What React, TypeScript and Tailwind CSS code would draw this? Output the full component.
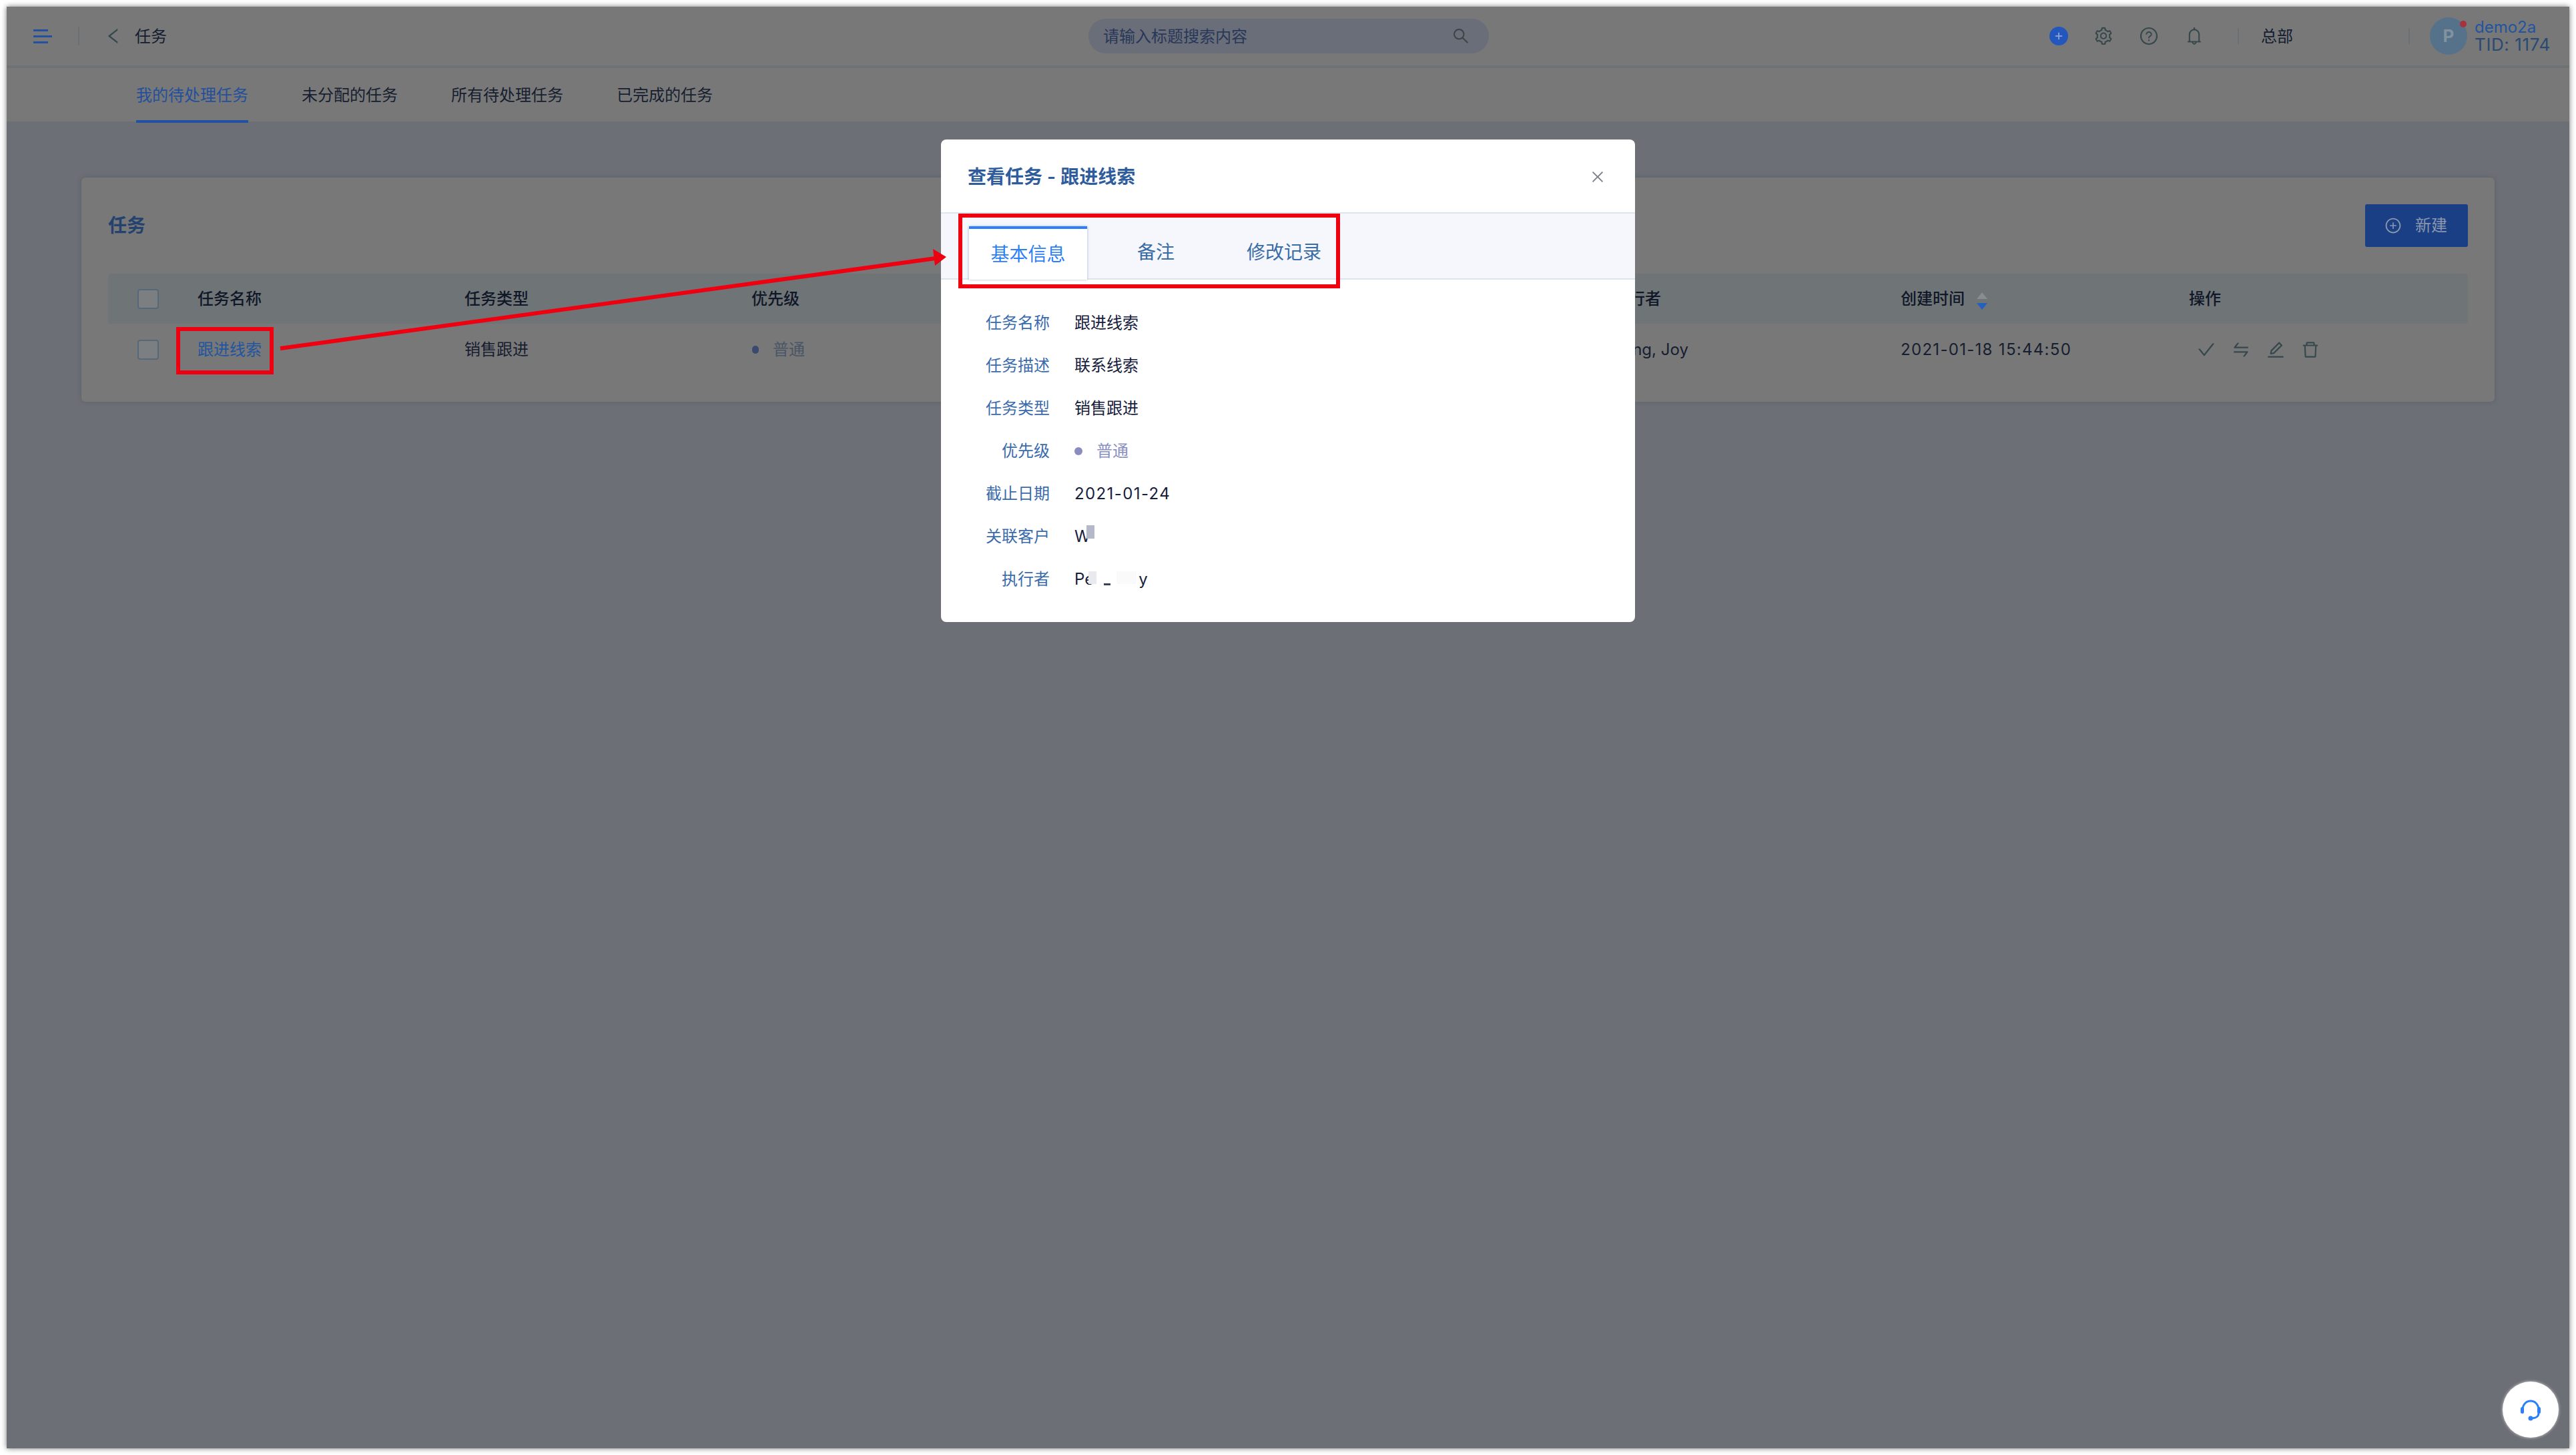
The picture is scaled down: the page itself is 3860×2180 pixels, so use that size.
import React from "react";
import {
  AiOutlineSetting,
  AiOutlineQuestionCircle,
  AiOutlineBell,
  AiOutlineSearch,
  AiOutlineCheck,
  AiOutlineSwap,
  AiOutlineEdit,
  AiOutlineDelete,
  AiOutlinePlusCircle,
  AiOutlineClose,
  AiOutlineLeft,
  AiOutlinePlus,
} from "react-icons/ai";

function Checkbox() {
  return <span className="block w-[32px] h-[30px] rounded-[4px] border-2 border-[#56687a] bg-[#7c7f81]" />;
}

function HeaderBar() {
  return (
    <header className="h-[92px] shrink-0 border-b-4 border-[#6d7274] bg-[#787878] flex items-center">
      <div className="ml-[40px] w-[28px] flex flex-col gap-[6px]">
        <span className="block h-[3px] w-[22px] bg-[#2450a0]" />
        <span className="block h-[3px] w-[28px] bg-[#2450a0]" />
        <span className="block h-[3px] w-[22px] bg-[#2450a0]" />
      </div>
      <span className="ml-[39px] w-[2px] h-[28px] bg-[#6a7074]" />
      <AiOutlineLeft className="ml-[36px] text-[#36484c]" size={30} />
      <span className="ml-[17px] mt-[1px] text-[24px] leading-none text-[#141c30]">任务</span>
      <div className="ml-[1381px] w-[600px] h-[52px] rounded-full bg-[#6a6e78] flex items-center justify-between pl-[22px] pr-[28px]">
        <span className="mt-[1px] text-[24px] leading-none text-[#28375a]">请输入标题搜索内容</span>
        <AiOutlineSearch className="text-[#3e4448]" size={28} />
      </div>
      <div className="ml-[840px] w-[28px] h-[28px] rounded-full bg-[#2357bd] flex items-center justify-center">
        <AiOutlinePlus className="text-[#8ba6d8]" size={14} strokeWidth={60} />
      </div>
      <AiOutlineSetting className="ml-[38px] text-[#36484c]" size={30} />
      <AiOutlineQuestionCircle className="ml-[38px] text-[#36484c]" size={30} />
      <AiOutlineBell className="ml-[38px] text-[#36484c]" size={30} />
      <span className="ml-[50px] w-[2px] h-[24px] bg-[#6a7074]" />
      <span className="ml-[33px] mt-[1px] text-[24px] leading-none text-[#141c30]">总部</span>
      <span className="ml-[173px] w-[2px] h-[24px] bg-[#6a7074]" />
      <div className="ml-[30px] relative w-[56px] h-[56px] rounded-full bg-[#56718a] flex items-center justify-center">
        <span className="text-[26px] font-bold text-[#82929f] leading-none">P</span>
        <span className="absolute right-[1px] top-[5px] w-[10px] h-[10px] rounded-full bg-[#a5323c]" />
      </div>
      <div className="ml-[11px] flex flex-col leading-[26px] whitespace-nowrap">
        <span className="text-[24px] text-[#2254a0]">demo2a</span>
        <span className="text-[26px] tracking-[0.6px] text-[#2a4a72]">TID: 1174</span>
      </div>
    </header>
  );
}

function TabsBar() {
  const tabs = ["我的待处理任务", "未分配的任务", "所有待处理任务", "已完成的任务"];
  return (
    <nav className="h-[80px] shrink-0 bg-[#787878] pl-[194px] flex gap-[80px]">
      {tabs.map((t, i) => (
        <div
          key={t}
          className={
            i === 0
              ? "h-[82px] pt-[3px] border-b-4 border-[#2250a3] flex items-center text-[24px] text-[#234f9c]"
              : "h-[82px] pt-[3px] border-b-4 border-transparent flex items-center text-[24px] text-[#161e30]"
          }
        >
          {t}
        </div>
      ))}
    </nav>
  );
}

const GRID = "grid grid-cols-[134px_400px_430px_1291px_431px_432px_1fr] items-center";

function TaskCard() {
  return (
    <section className="mx-[112px] mt-[84px] h-[336px] rounded-[6px] bg-[#787878] px-[40px] pt-[40px] shadow-[0_0_6px_rgba(60,70,80,0.35)]">
      <div className="h-[64px] flex items-center justify-between">
        <h2 className="text-[28px] font-semibold text-[#24426e]">任务</h2>
        <button className="w-[154px] h-[64px] rounded-[3px] bg-[#1a3f84] flex items-center pl-[29px] text-[24px] text-[#8a97ae]">
          <AiOutlinePlusCircle size={26} />
          <span className="ml-[20px]">新建</span>
        </button>
      </div>
      <div className={`${GRID} mt-[40px] h-[75px] rounded-[4px] bg-[#6f7476] text-[24px] font-medium text-[#0f1728]`}>
        <div className="pl-[44px]"><Checkbox /></div>
        <div>任务名称</div>
        <div>任务类型</div>
        <div>优先级</div>
        <div>执行者</div>
        <div className="flex items-center">
          创建时间
          <span className="ml-[18px] mt-[6px] flex flex-col gap-[6px]">
            <span className="block w-0 h-0 border-x-[8px] border-x-transparent border-b-[10px] border-b-[#8a8d90]" />
            <span className="block w-0 h-0 border-x-[8px] border-x-transparent border-t-[10px] border-t-[#2460bd]" />
          </span>
        </div>
        <div>操作</div>
      </div>
      <div className={`${GRID} h-[78px] text-[24px] text-[#161e30]`}>
        <div className="pl-[44px]"><Checkbox /></div>
        <div className="text-[#2255a0]">跟进线索</div>
        <div>销售跟进</div>
        <div className="flex items-center text-[#4a5566]">
          <span className="ml-[1px] w-[10px] h-[12px] rounded-full bg-[#3a4a6e]" />
          <span className="ml-[21px]">普通</span>
        </div>
        <div className="whitespace-nowrap">Peng, Joy</div>
        <div className="whitespace-nowrap tracking-[1.3px]">2021-01-18 15:44:50</div>
        <div className="flex items-center pl-[11px] text-[#36484c]">
          <AiOutlineCheck size={30} />
          <AiOutlineSwap className="ml-[22px]" size={30} />
          <AiOutlineEdit className="ml-[22px]" size={30} />
          <AiOutlineDelete className="ml-[22px]" size={30} />
        </div>
      </div>
    </section>
  );
}

function Row({ label, children }: { label: string; children: React.ReactNode }) {
  return (
    <div className="h-[64px] pt-[2px] flex items-center text-[24px]">
      <div className="w-[163px] text-right text-[#3a6bad]">{label}</div>
      <div className="ml-[37px] flex items-center text-[#16203c]">{children}</div>
    </div>
  );
}

function Modal() {
  return (
    <div className="absolute inset-0 flex justify-center items-start pt-[199px]">
      <div className="w-[1040px] rounded-[8px] bg-white overflow-hidden">
        <div className="h-[109px] pt-[2px] flex items-center justify-between pl-[40px] pr-[44px]">
          <h3 className="text-[28px] font-semibold text-[#2f5c9c]">查看任务 - 跟进线索</h3>
          <AiOutlineClose className="text-[#7c8088]" size={24} />
        </div>
        <div className="h-[101px] border-y-2 border-[#dde5ee] bg-[#f5f7fc] flex items-end pl-[42px] text-[28px] text-[#3a6ca8]">
          <div className="w-[177px] h-[80px] -mb-[2px] border-t-4 border-[#2d7ff9] bg-white shadow-[1px_0_3px_rgba(150,165,190,0.45),-1px_0_3px_rgba(150,165,190,0.45)] flex items-center justify-center text-[#2d7ff9]">
            基本信息
          </div>
          <div className="ml-[75px] h-[78px] flex items-center">备注</div>
          <div className="ml-[108px] h-[78px] flex items-center">修改记录</div>
        </div>
        <div className="pt-[32px] pb-[33px]">
          <Row label="任务名称">跟进线索</Row>
          <Row label="任务描述">联系线索</Row>
          <Row label="任务类型">销售跟进</Row>
          <Row label="优先级">
            <span className="w-[12px] h-[12px] rounded-full bg-[#8a8cc0]" />
            <span className="ml-[21px] text-[#8a8fc2]">普通</span>
          </Row>
          <Row label="截止日期"><span className="tracking-[1.4px]">2021-01-24</span></Row>
          <Row label="关联客户">
            <span>W</span>
            <span className="-ml-[6px] -mt-[14px] w-[12px] h-[20px] bg-[#b5b8c8]" />
          </Row>
          <Row label="执行者">
            <span>Pe</span>
            <span className="-ml-[8px] -mt-[6px] w-[12px] h-[19px] bg-[#e8eaf0]" />
            <span className="ml-[11px] mt-[14px] w-[10px] h-[3px] bg-[#3a4258]" />
            <span className="ml-[9px] -mt-[6px] w-[30px] h-[19px] bg-[#fafafa]" />
            <span className="ml-[3px]">y</span>
          </Row>
        </div>
      </div>
    </div>
  );
}

export default function App() {
  return (
    <div className="relative w-[3860px] h-[2180px] bg-white overflow-hidden p-[10px] font-['Inter','Noto_Sans_CJK_SC',sans-serif]">
      <div className="relative w-[3840px] h-[2160px] flex flex-col bg-[#6c6f76] shadow-[0_0_8px_rgba(0,0,0,0.55)]">
        <HeaderBar />
        <TabsBar />
        <TaskCard />
        <Modal />
        <div className="absolute left-[3740px] top-[2060px] w-[84px] h-[84px] rounded-full bg-white flex items-center justify-center shadow-[0_0_4px_rgba(255,255,255,0.7)]">
          <svg width="34" height="34" viewBox="0 0 34 34" fill="none">
            <path d="M5 17 C5 9.5 10.5 4 17 4 C23.5 4 29 9.5 29 17" stroke="#2d7ff9" strokeWidth="3" />
            <rect x="2" y="13" width="5" height="10" rx="2.5" fill="#2d7ff9" />
            <rect x="27" y="13" width="5" height="10" rx="2.5" fill="#2d7ff9" />
            <path d="M29 22 C29 27 25 30 19 30" stroke="#2d7ff9" strokeWidth="3" />
            <circle cx="17" cy="30" r="3.5" fill="#2d7ff9" />
          </svg>
        </div>
      </div>
      {/* annotations drawn over the screenshot */}
      <div className="absolute left-[264px] top-[490px] w-[146px] h-[71px] border-[6px] border-[#ee0011]" />
      <div className="absolute left-[1436px] top-[320px] w-[572px] h-[112px] border-[6px] border-[#ee0011]" />
      <svg className="absolute left-0 top-0 pointer-events-none" width="3860" height="2180" viewBox="0 0 3860 2180">
        <line x1="420" y1="522" x2="1402" y2="387" stroke="#ee0011" strokeWidth="6" />
        <polygon points="1418,385 1398,373 1401,398" fill="#ee0011" />
      </svg>
    </div>
  );
}
